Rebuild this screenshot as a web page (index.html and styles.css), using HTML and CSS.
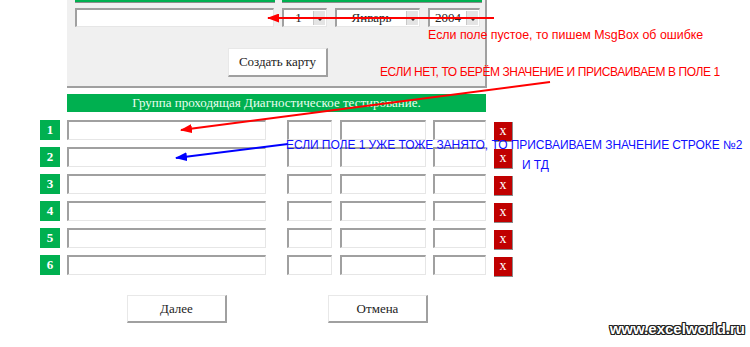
FILE: index.html
```html
<!DOCTYPE html>
<html>
<head>
<meta charset="utf-8">
<title>Диагностическое тестирование</title>
<link rel="stylesheet" href="styles.css">
</head>
<body>
<div id="page">

<div class="panel">
  <div class="topbars">
    <div class="topbar"></div>
    <div class="topbar"></div>
  </div>
  <div class="inputrow">
    <div class="field wide"></div>
    <div class="combo c1"><span class="val">1</span><span class="drop"></span></div>
    <div class="combo c2"><span class="val">Январь</span><span class="drop"></span></div>
    <div class="combo c3"><span class="val">2004</span><span class="drop"></span></div>
  </div>
  <div class="btn create">Создать карту</div>
</div>

<div class="header">Группа проходящая Диагностическое тестирование.</div>

<div class="rows">
  <div class="row"><div class="num">1</div><div class="field name"></div><div class="field fa"></div><div class="field fb"></div><div class="field fc"></div><div class="del">x</div></div>
  <div class="row"><div class="num">2</div><div class="field name"></div><div class="field fa"></div><div class="field fb"></div><div class="field fc"></div><div class="del">x</div></div>
  <div class="row"><div class="num">3</div><div class="field name"></div><div class="field fa"></div><div class="field fb"></div><div class="field fc"></div><div class="del">x</div></div>
  <div class="row"><div class="num">4</div><div class="field name"></div><div class="field fa"></div><div class="field fb"></div><div class="field fc"></div><div class="del">x</div></div>
  <div class="row"><div class="num">5</div><div class="field name"></div><div class="field fa"></div><div class="field fb"></div><div class="field fc"></div><div class="del">x</div></div>
  <div class="row"><div class="num">6</div><div class="field name"></div><div class="field fa"></div><div class="field fb"></div><div class="field fc"></div><div class="del">x</div></div>
</div>

<div class="bottombtns">
  <div class="btn">Далее</div>
  <div class="btn">Отмена</div>
</div>

<!-- annotations drawn over the form -->
<svg class="arrows" width="750" height="347">
  <defs>
    <marker id="headred" markerWidth="12" markerHeight="9" refX="11" refY="4.5" orient="auto" markerUnits="userSpaceOnUse">
      <path d="M0,0 L12,4.5 L0,9 z" fill="#ff0000"/>
    </marker>
    <marker id="headblue" markerWidth="12" markerHeight="9" refX="11" refY="4.5" orient="auto" markerUnits="userSpaceOnUse">
      <path d="M0,0 L12,4.5 L0,9 z" fill="#0000ff"/>
    </marker>
  </defs>
  <line x1="494" y1="18" x2="268" y2="18" stroke="#ff0000" stroke-width="2" marker-end="url(#headred)"/>
  <line x1="550" y1="82" x2="181" y2="130" stroke="#ff0000" stroke-width="2" marker-end="url(#headred)"/>
  <line x1="288" y1="144" x2="176" y2="158" stroke="#0000ff" stroke-width="2" marker-end="url(#headblue)"/>
</svg>

<div class="note note1">Если поле пустое, то пишем MsgBox об ошибке</div>
<div class="note note2">ЕСЛИ НЕТ, ТО БЕРЁМ ЗНАЧЕНИЕ И ПРИСВАИВАЕМ В ПОЛЕ 1</div>
<div class="note note3">
  <div>ЕСЛИ ПОЛЕ 1 УЖЕ ТОЖЕ ЗАНЯТО, ТО ПРИСВАИВАЕМ ЗНАЧЕНИЕ СТРОКЕ №2</div>
  <div class="line2">И ТД</div>
</div>

<div class="watermark">www.excelworld.ru</div>

</div>
</body>
</html>
```
FILE: styles.css
```css
body{
margin:0;
background-color:#ffffff;
font-family:"Liberation Serif", serif;
color:#222222;
}

#page{
position:relative;
width:750px;
height:347px;
overflow:hidden;
}

/* top grey form panel */
.panel{
box-sizing:border-box;
margin-left:67px;
width:420px;
height:88px;
padding-left:8px;
background-color:#f0f0f0;
border-right:2px solid #a0a0a0;
border-bottom:2px solid #a0a0a0;
}

.topbars{
display:flex;
gap:7px;
}

.topbar{
width:200px;
height:2px;
background-color:#00b050;
border-bottom:1px solid #8c8c8c;
}

.inputrow{
display:flex;
gap:8px;
margin-top:5px;
height:19px;
}

.field{
box-sizing:border-box;
height:20px;
background-color:#ffffff;
border-top:2px solid #a0a0a0;
border-left:2px solid #a0a0a0;
border-bottom:1px solid #e6e6e6;
border-right:1px solid #e6e6e6;
}

.field.wide{
width:199px;
height:19px;
}

.combo{
box-sizing:border-box;
display:flex;
height:19px;
background-color:#ffffff;
border-top:2px solid #a0a0a0;
border-left:2px solid #a0a0a0;
border-bottom:1px solid #e6e6e6;
border-right:1px solid #e6e6e6;
font-size:13px;
line-height:16px;
}

.combo .val{
flex:1;
text-align:center;
}

.combo .drop{
position:relative;
width:11px;
margin:1px 1px 1px 0;
background-color:#e4e4e4;
border-left:1px solid #c8c8c8;
}

.combo .drop::after{
content:"";
position:absolute;
left:3px;
top:7px;
border-left:3px solid transparent;
border-right:3px solid transparent;
border-top:3px solid #333333;
}

.c1{width:45px;}
.c2{width:85px;}
.c3{width:52px;}

.btn{
box-sizing:border-box;
width:100px;
height:28px;
background-color:#ffffff;
border-top:1px solid #e8e8e8;
border-left:1px solid #e8e8e8;
border-right:2px solid #a0a0a0;
border-bottom:2px solid #a0a0a0;
font-size:13px;
line-height:25px;
text-align:center;
color:#222222;
}

.btn.create{
margin-top:21px;
margin-left:153px;
height:29px;
line-height:26px;
}

/* green caption */
.header{
margin-top:6px;
margin-left:67px;
width:419px;
height:18px;
background-color:#00b050;
color:#eaffef;
font-size:13px;
line-height:18px;
text-align:center;
}

.rows{
display:flex;
flex-direction:column;
gap:7px;
margin-top:8px;
padding-left:40px;
}

.row{
display:flex;
height:20px;
}

.num{
width:20px;
height:20px;
background-color:#00b050;
color:#ffffff;
font-weight:bold;
font-size:13px;
line-height:19px;
text-align:center;
}

.field.name{margin-left:7px;width:199px;}
.field.fa{margin-left:21px;width:45px;}
.field.fb{margin-left:8px;width:86px;}
.field.fc{margin-left:7px;width:53px;}

.del{
box-sizing:border-box;
margin-left:8px;
margin-top:2px;
width:19px;
height:20px;
background-color:#c00000;
border-right:1px solid #8a8a8a;
border-bottom:1px solid #8a8a8a;
color:#ffffff;
font-size:14px;
line-height:17px;
text-align:center;
}

.bottombtns{
display:flex;
gap:101px;
margin-top:20px;
padding-left:127px;
}

/* overlay annotations */
.arrows{
position:absolute;
left:0;
top:0;
}

.note{
position:absolute;
font-family:"Liberation Sans", sans-serif;
font-size:12px;
white-space:nowrap;
}

.note1{
left:428px;
top:28px;
color:#ff0000;
font-size:12.4px;
}

.note2{
left:380px;
top:65px;
color:#ff0000;
letter-spacing:-0.4px;
}

.note3{
left:286px;
top:135px;
color:#1010ff;
letter-spacing:-0.05px;
line-height:20px;
}

.note3 .line2{
padding-left:236px;
}

.watermark{
position:absolute;
right:5px;
top:320px;
font-family:"Liberation Sans", sans-serif;
font-weight:bold;
font-size:15px;
color:#ffffff;
text-shadow:1px 0 0 #222, -1px 0 0 #222, 0 1px 0 #222, 0 -1px 0 #222, 1px 1px 0 #222, -1px -1px 0 #222, 1px -1px 0 #222, -1px 1px 0 #222;
}
```
